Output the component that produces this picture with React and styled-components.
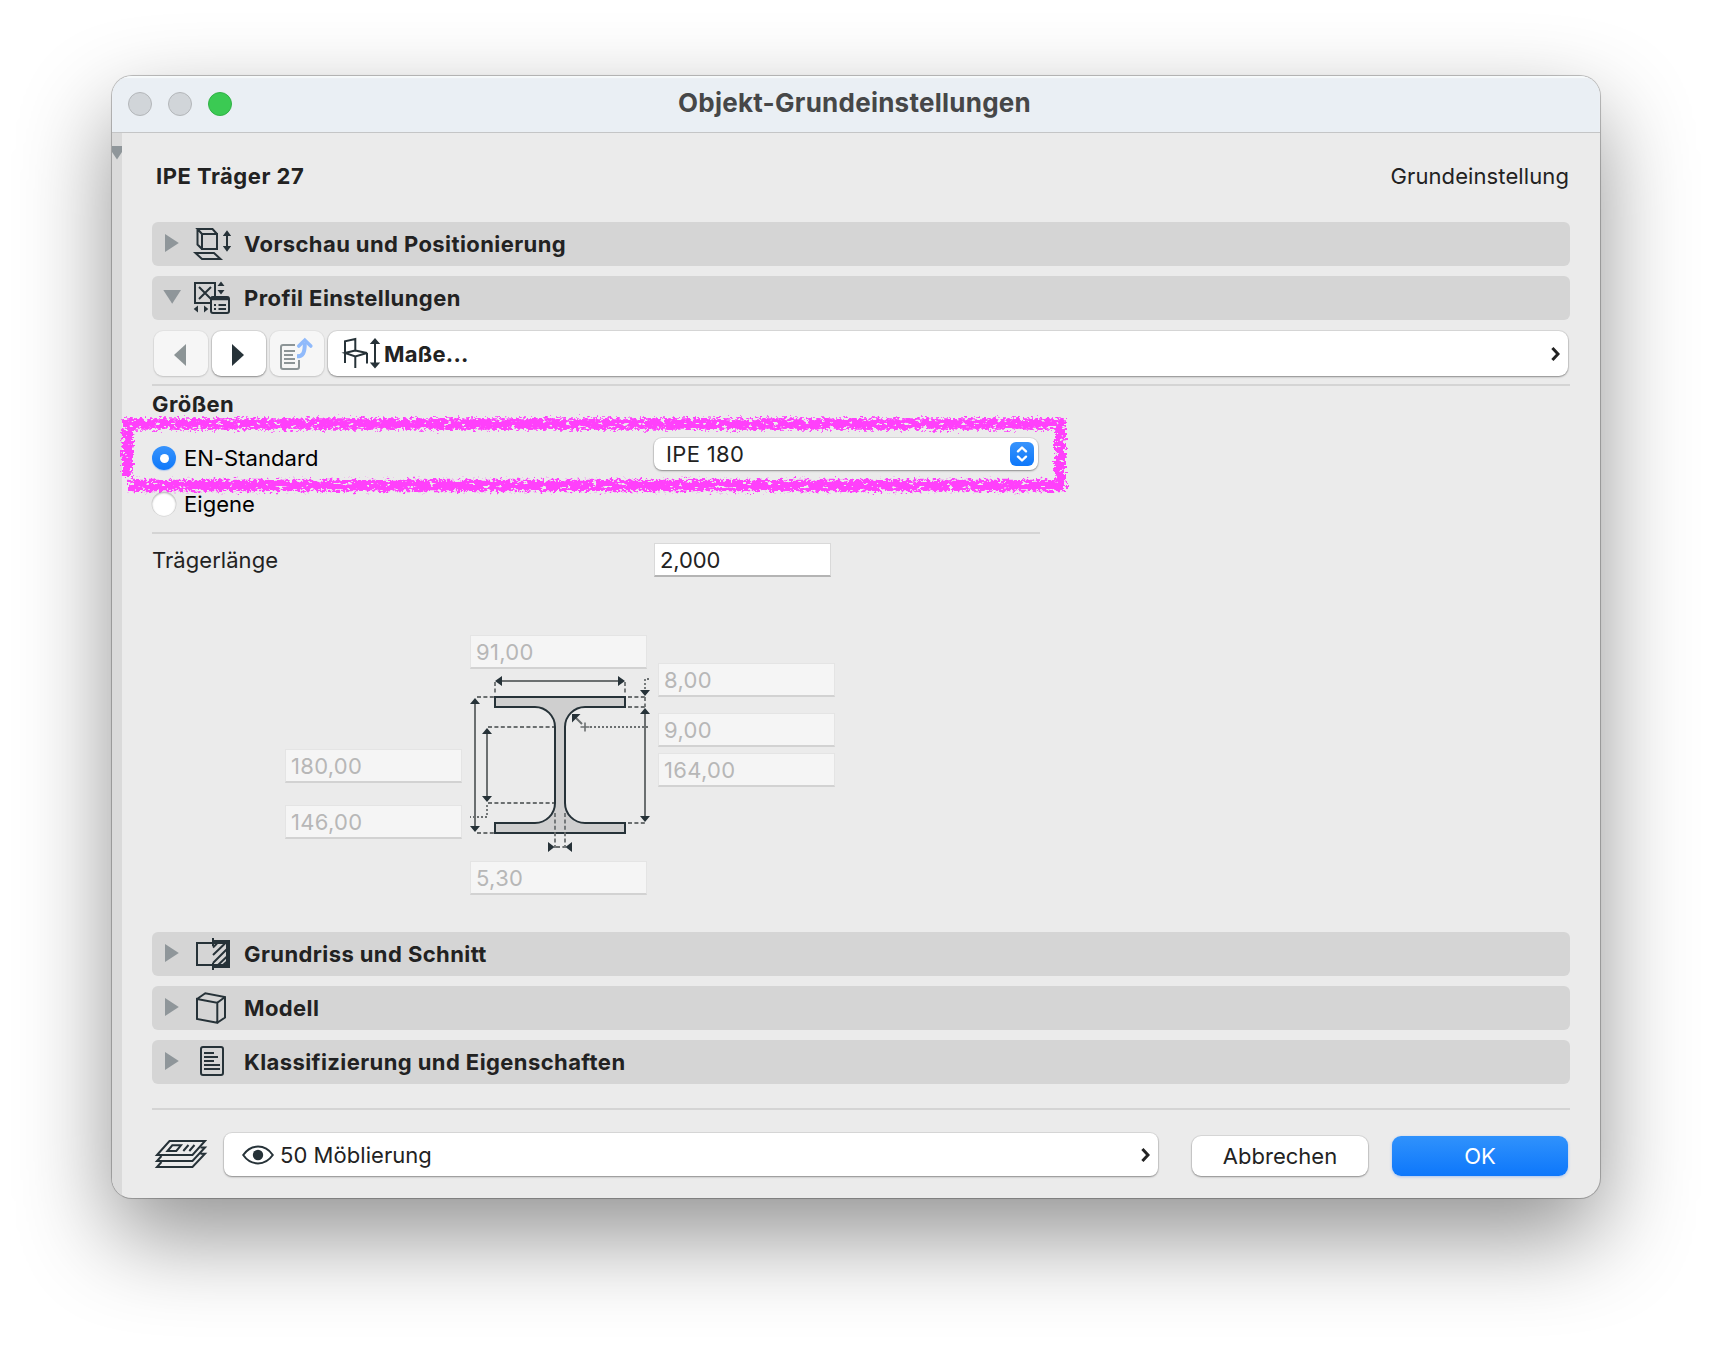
import React from 'react';
import styled, { createGlobalStyle, css } from 'styled-components';

const INK = '#263238';

const GlobalStyle = createGlobalStyle`
    * {
        box-sizing: border-box;
    }
    body {
        margin: 0;
        background: #fff;
        color: #222;
        font-family: Inter, "Liberation Sans", sans-serif;
        font-size: 22px;
        letter-spacing: 0.05px;
    }
    svg {
        display: block;
        flex: none;
    }
`

const Desktop = styled.div`
    height: 1346px;
    padding: 76px 112px 0;
    overflow: hidden;
`

const Window = styled.div`
    width: 1488px;
    height: 1122px;
    display: flex;
    flex-direction: column;
    overflow: hidden;
    border-radius: 20px;
    background-color: #ebebeb;
    box-shadow: 0 0 0 1px rgba(0, 0, 0, 0.2), 0 0 2px rgba(0, 0, 0, 0.15), 0 38px 92px rgba(0, 0, 0, 0.43);
`

const TitleBar = styled.div`
    height: 57px;
    flex: none;
    display: grid;
    grid-template-columns: 1fr auto 1fr;
    align-items: center;
    padding: 0 19px 0 16px;
    background-color: #eaeff4;
    border-bottom: 1px solid #c4c5c6;
    box-shadow: inset 0 2px 1px #f7fafb;
`

const Lights = styled.div`
    display: flex;
    gap: 16px;
`

const Light = styled.span`
    width: 24px;
    height: 24px;
    border-radius: 50%;
    background-color: ${props => props.$on ? '#3bca53' : '#d1d5d9'};
    border: 1px solid ${props => props.$on ? '#31b146' : '#b3b6b9'};
`

const Title = styled.h1`
    margin: 0 0 3px;
    color: #464748;
    font-size: 26px;
    font-weight: 700;
    line-height: 40px;
    letter-spacing: 0.25px;
`

const Body = styled.div`
    flex: 1;
    display: flex;
`

const Rail = styled.div`
    width: 10px;
    padding-top: 13px;
    background-color: #dadada;
`

const Content = styled.div`
    flex: 1;
    display: flex;
    flex-direction: column;
    padding: 0 30px;
`

const Strong = styled.span`
    font-weight: 700;
    letter-spacing: 0.41px;
`

const Header = styled.div`
    height: 86px;
    margin-bottom: 3px;
    padding: 0 1px 0 4px;
    display: flex;
    align-items: center;
    justify-content: space-between;
    letter-spacing: 0.1px;

    ${Strong} {
        letter-spacing: 0.5px;
    }
`

const Sections = styled.div`
    display: flex;
    flex-direction: column;
    gap: 10px;
`

const SectionBar = styled.div`
    height: 44px;
    display: flex;
    align-items: center;
    padding-left: 8px;
    border-radius: 6px;
    background-color: #d5d5d5;

    ${Strong} {
        margin-left: 10px;
    }
`

const Toolbar = styled.div`
    display: flex;
    gap: 4px;
    margin: 11px 2px 8px;
`

const raised = css`
    background-color: #fff;
    box-shadow: 0 0 0 1px rgba(0, 0, 0, 0.07), 0 1px 2px rgba(0, 0, 0, 0.36);
`

const ToolButton = styled.button`
    ${raised}
    width: 54px;
    height: 45px;
    padding: 0;
    border: none;
    border-radius: 9px;
    ${props => props.$disabled && css`
        background-color: #f6f6f6;
        box-shadow: 0 0 0 1px rgba(0, 0, 0, 0.03), 0 1px 2px rgba(0, 0, 0, 0.14);
    `}
`

const PageSelect = styled.div`
    ${raised}
    flex: 1;
    height: 45px;
    display: flex;
    align-items: center;
    justify-content: space-between;
    padding-right: 8px;
    border-radius: 9px;

    ${Strong} {
        letter-spacing: 0.25px;
    }
`

const Inline = styled.div`
    display: flex;
    align-items: center;
`

const Divider = styled.div`
    height: 2px;
    width: ${props => props.$width || '100%'};
    margin-top: ${props => props.$top || 0}px;
    flex: none;
    background-color: #d4d4d4;
`

const GroupTitle = styled(Strong)`
    height: 35px;
    line-height: 36px;
    margin-bottom: 17px;
`

const FormRow = styled.div`
    position: relative;
    width: 888px;
    height: ${props => props.$height}px;
    display: grid;
    grid-template-columns: 502px 1fr;
    align-items: center;
`

const RadioLabel = styled.label`
    display: flex;
    align-items: center;
    gap: 8px;
    color: #000;
`

const Radio = styled.span`
    width: 24px;
    height: 24px;
    display: flex;
    align-items: center;
    justify-content: center;
    border-radius: 50%;
    background: #fff;
    box-shadow: inset 0 1px 2px rgba(0, 0, 0, 0.3), 0 0 0 0.5px rgba(0, 0, 0, 0.12);

    ${props => props.$checked && css`
        background: linear-gradient(#3793fc, #0e78fa);
        box-shadow: 0 1px 1px rgba(0, 100, 255, 0.25);

        &::after {
            content: '';
            width: 9px;
            height: 9px;
            border-radius: 50%;
            background: #fff;
        }
    `}
`

const ProfileSelect = styled.div`
    ${raised}
    align-self: start;
    width: 384px;
    height: 32px;
    display: flex;
    align-items: center;
    justify-content: space-between;
    padding: 0 4px 0 12px;
    border-radius: 8px;
    letter-spacing: 0.35px;
`

const Stepper = styled.span`
    width: 24px;
    height: 24px;
    border-radius: 6px;
    background: linear-gradient(#3793fc, #0e78fa);
`

const Field = styled.div`
    width: 177px;
    height: 34px;
    flex: none;
    padding-left: 5px;
    line-height: 32px;
    letter-spacing: ${props => props.$disabled ? '0.3px' : '-0.1px'};
    background-color: ${props => props.$disabled ? '#f5f5f5' : '#fff'};
    color: ${props => props.$disabled ? '#b7b7b7' : '#222'};
    border: 1px solid ${props => props.$disabled ? '#e4e4e4' : '#d9d9d9'};
    border-bottom: 2px solid ${props => props.$disabled ? '#d2d2d2' : '#b4b4b4'};
`

const Profile = styled.div`
    display: flex;
    gap: 8px;
    margin: 49px 0 37px 133px;
`

const FieldColumn = styled.div`
    display: flex;
    flex-direction: column;
    padding-top: ${props => props.$top || 0}px;
    gap: ${props => props.$gap || 0}px;
`

const Footer = styled.div`
    display: flex;
    align-items: flex-end;
    margin-top: 23px;
    padding-right: 2px;
`

const LayerSelect = styled.div`
    ${raised}
    width: 934px;
    height: 43px;
    display: flex;
    align-items: center;
    justify-content: space-between;
    padding: 0 8px 0 18px;
    border-radius: 8px;

    ${Inline} {
        gap: 6px;
    }
`

const Button = styled.button`
    ${raised}
    width: 176px;
    height: 40px;
    margin-left: 24px;
    padding: 0;
    border: none;
    border-radius: 9px;
    color: #222;
    font: inherit;

    ${LayerSelect} + & {
        margin-left: 34px;
    }

    ${props => props.$primary && css`
        background: linear-gradient(#3092fc, #0d77fb);
        box-shadow: 0 1px 3px rgba(0, 100, 255, 0.3);
        color: #fff;
    `}
`

const Marker = styled.svg`
    position: absolute;
    left: -42px;
    top: -32px;
    pointer-events: none;
`

const Disclosure = ({ open }) => (
    <svg width="30" height="44" fill="#8f969a">
        {open ? <path d="M3.3 14H21L12.2 27.8Z" /> : <path d="M5 12L18.8 21L5 30Z" />}
    </svg>
)

const icons = {
    preview: <>
        <path d="M12 12H27V27H12ZM12 12L7.5 7H22.5L27 12M7.5 6.5V22.5L12 27M5.5 31H24L30.5 37H12Z" />
        <path d="M37 12V26" />
        <path d="M37 8.3L41.2 14H32.800ZM37 29.7L41.2 24H32.800Z" fill={INK} stroke="none" />
    </>,
    profile: <>
        <path d="M20 27H5V7H25V20M9 11L21 23M21 11L9 23" />
        <rect x="21" y="21" width="18" height="16" rx="2" fill="#d5d5d5" />
        <path d="M21 22.500H39" strokeWidth="3.500" />
        <path d="M24 29H26M28.500 29H36M24 33H26M28.500 33H36" />
        <path d="M31 5.500L34.500 10H27.500ZM31 18.500L34.500 14H27.500ZM3.700 33L8 29.500V36.500ZM18.300 33L14 29.500V36.500Z" fill={INK} stroke="none" />
    </>,
    section: <>
        <path d="M22.7 11H7V33H22.7M23 6V14M23 31V38" />
        <path d="M22.7 10H38V34H22.7" strokeWidth="4" />
        <path d="M23 15.5L27 11.5M23 23L35 11.5M23 31L37 17M28 33L37 24.5M33 33L37 29.5" />
    </>,
    model: <path d="M7 13L27.3 16.8V36.8L7 33ZM7 13L15.3 7.2L35 11V31.5L27.3 36.8M27.3 16.8L35 11" />,
    document: <>
        <rect x="11" y="7" width="22" height="28" rx="2" />
        <path d="M14 13H24M14 17H28M14 21H24M14 25H30M14 29H30" />
    </>,
}

const SectionIcon = ({ name }) => (
    <svg width="44" height="44" fill="none" stroke={INK} strokeWidth="2">{icons[name]}</svg>
)

const Section = ({ icon, open, children }) => (
    <SectionBar>
        <Disclosure open={open} />
        <SectionIcon name={icon} />
        <Strong>{children}</Strong>
    </SectionBar>
)

const ChairIcon = () => (
    <svg width="56" height="45" fill="none" stroke={INK} strokeWidth="2">
        <path d="M17 32V10.2L27.3 8V19.5L17 22L27.3 25.5L39 22L27.3 19.5M27.3 25.5V37M39 22V32.5" />
        <path d="M47 12V33" />
        <path d="M47 7L52.2 13H41.8ZM47 37.5L52.2 31.5H41.8Z" fill={INK} stroke="none" />
    </svg>
)

const TransferIcon = () => (
    <svg width="54" height="45" fill="none" stroke="#8c9496" strokeWidth="2">
        <path d="M25 14H13Q11 14 11 16V36Q11 38 13 38H27Q29 38 29 36V29" />
        <path d="M14 20H25M14 24H23M14 28H25M14 32H25" />
        <path d="M27 25.3C33 25.3 34.8 22 34.8 12" stroke="#90bafb" strokeWidth="4" />
        <path d="M28.8 15L34.8 9.2L40.8 15" stroke="#90bafb" strokeWidth="3.6" strokeLinecap="round" />
    </svg>
)

const Chevron = () => (
    <svg width="9" height="16" fill="none" stroke="#222" strokeWidth="3">
        <path d="M1.4 2L7 8L1.4 14" />
    </svg>
)

const LayersIcon = () => (
    <svg width="72" height="43" viewBox="2 8 72 43" fill="none" stroke={INK} strokeWidth="2">
        <path d="M7 30L19.5 16H55L42.5 30Z" />
        <path d="M11.5 31L7 36H42.5L55 22.5H50.5M11.5 37L7 42H42.5L55 28.7H50.5" />
        <path d="M17.5 26L22.3 20.3H31L26.3 26Z" />
        <path d="M33.3 26L38.5 20M39.3 26L44.5 20" />
    </svg>
)

const EyeIcon = () => (
    <svg width="32" height="20" fill="none" stroke={INK} strokeWidth="2">
        <path d="M1.2 10C9 -1.2 23 -1.2 30.8 10C23 21.2 9 21.2 1.2 10Z" />
        <circle cx="16" cy="10" r="5.2" fill={INK} stroke="none" />
    </svg>
)

// I-beam cross section with its dimension lines
const BeamDrawing = () => (
    <svg width="180" height="192" fill="none" stroke="#6b6f70" strokeWidth="2">
        <path
            d="M25 28H155V38H115A20 20 0 0 0 95 58V134A20 20 0 0 0 115 154H155V164H25V154H65A20 20 0 0 0 85 134V58A20 20 0 0 0 65 38H25Z"
            fill="#cfcfcf"
            stroke={INK}
        />
        <path d="M31 12H149M5 34V158M17 64V128M175 44V148M104 47L112 55" />
        <path d="M110.5 58H119.5M115 53.5V62.5" strokeWidth="1.6" />
        <g strokeDasharray="4 2.4" strokeWidth="1.8">
            <path d="M25 13V25M155 13V25M7 28H24M7 164H24M18 58H84M18 134H84M158 28H175M158 38H175M175 28V38M158 154H175" />
            <path d="M85 144V179M95 144V179M86 178H94" />
        </g>
        <g strokeDasharray="2 2" strokeWidth="1.8">
            <path d="M17 136V148H0M175 20V10H180M120 58H180" />
        </g>
        <g fill={INK} stroke="none">
            <path d="M25 12L32 7V17ZM155 12L148 7V17Z" />
            <path d="M5 29L10 35H0ZM5 163L10 157H0Z" />
            <path d="M17 59L22 65H12ZM17 133L22 127H12Z" />
            <path d="M175 27L180 21H170ZM175 39L180 45H170ZM175 153L180 147H170Z" />
            <path d="M102 45H110.5L102 53.5Z" />
            <path d="M84.500 178L78 173V183ZM95.500 178L102 173V183Z" />
        </g>
    </svg>
)

// crayon frame around the row
const CrayonFrame = () => (
    <Marker width="976" height="96" fill="none" stroke="#ff40fb">
        <defs>
            <filter id="crayon" filterUnits="userSpaceOnUse" x="0" y="0" width="976" height="96">
                <feTurbulence type="fractalNoise" baseFrequency="0.3 0.4" numOctaves="3" seed="4" result="noise" />
                <feDisplacementMap in="SourceGraphic" in2="noise" scale="11" xChannelSelector="R" yChannelSelector="G" result="rough" />
                <feTurbulence type="fractalNoise" baseFrequency="0.16 0.3" numOctaves="3" seed="11" />
                <feColorMatrix values="0 0 0 0 0  0 0 0 0 0  0 0 0 0 0  0 0 0 -14 10.2" result="holes" />
                <feComposite in="rough" in2="holes" operator="in" />
            </filter>
        </defs>
        <g filter="url(#crayon)">
            <path d="M12 18H956M18 79.5H956" strokeWidth="11.500" />
            <path d="M17.500 14V70M950.500 14V84" strokeWidth="11" />
        </g>
    </Marker>
)

const App = () => {
    return <Desktop>
        <GlobalStyle />
        <Window>
            <TitleBar>
                <Lights>
                    <Light />
                    <Light />
                    <Light $on />
                </Lights>
                <Title>Objekt-Grundeinstellungen</Title>
            </TitleBar>
            <Body>
                <Rail>
                    <svg width="10" height="14" fill="#8f969a"><path d="M0 0H10V6L5 13.500L0 6Z" /></svg>
                </Rail>
                <Content>
                    <Header>
                        <Strong>IPE Träger 27</Strong>
                        <span>Grundeinstellung</span>
                    </Header>

                    <Sections>
                        <Section icon="preview">Vorschau und Positionierung</Section>
                        <Section icon="profile" open>Profil Einstellungen</Section>
                    </Sections>

                    <Toolbar>
                        <ToolButton $disabled>
                            <svg width="54" height="45" fill="#8c9496"><path d="M20 24L32 13V35Z" /></svg>
                        </ToolButton>
                        <ToolButton>
                            <svg width="54" height="45" fill={INK}><path d="M32 24L20 13V35Z" /></svg>
                        </ToolButton>
                        <ToolButton $disabled><TransferIcon /></ToolButton>
                        <PageSelect>
                            <Inline>
                                <ChairIcon />
                                <Strong>Maße...</Strong>
                            </Inline>
                            <Chevron />
                        </PageSelect>
                    </Toolbar>
                    <Divider />

                    <GroupTitle>Größen</GroupTitle>
                    <FormRow $height={40}>
                        <RadioLabel><Radio $checked />EN-Standard</RadioLabel>
                        <ProfileSelect>
                            IPE 180
                            <Stepper>
                                <svg width="24" height="24" fill="none" stroke="#fff" strokeWidth="2.4" strokeLinecap="round" strokeLinejoin="round">
                                    <path d="M8 9.300L12 5.500L16 9.300M8 14.700L12 18.500L16 14.700" />
                                </svg>
                            </Stepper>
                        </ProfileSelect>
                        <CrayonFrame />
                    </FormRow>
                    <FormRow $height={52}>
                        <RadioLabel><Radio />Eigene</RadioLabel>
                    </FormRow>
                    <Divider $width="888px" $top={2} />
                    <FormRow $height={52}>
                        <span>Trägerlänge</span>
                        <Field>2,000</Field>
                    </FormRow>

                    <Profile>
                        <FieldColumn $top={114} $gap={22}>
                            <Field $disabled>180,00</Field>
                            <Field $disabled>146,00</Field>
                        </FieldColumn>
                        <FieldColumn>
                            <Field $disabled>91,00</Field>
                            <BeamDrawing />
                            <Field $disabled>5,30</Field>
                        </FieldColumn>
                        <FieldColumn $top={28} $gap={16}>
                            <Field $disabled>8,00</Field>
                            <FieldColumn $gap={6}>
                                <Field $disabled>9,00</Field>
                                <Field $disabled>164,00</Field>
                            </FieldColumn>
                        </FieldColumn>
                    </Profile>

                    <Sections>
                        <Section icon="section">Grundriss und Schnitt</Section>
                        <Section icon="model">Modell</Section>
                        <Section icon="document">Klassifizierung und Eigenschaften</Section>
                    </Sections>

                    <Divider $top={24} />
                    <Footer>
                        <LayersIcon />
                        <LayerSelect>
                            <Inline>
                                <EyeIcon />
                                <span>50 Möblierung</span>
                            </Inline>
                            <Chevron />
                        </LayerSelect>
                        <Button>Abbrechen</Button>
                        <Button $primary>OK</Button>
                    </Footer>
                </Content>
            </Body>
        </Window>
    </Desktop>
}

export default App;
